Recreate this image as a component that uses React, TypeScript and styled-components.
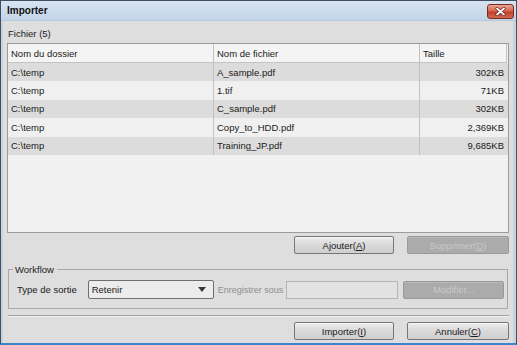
import React from "react";
import styled, { createGlobalStyle } from "styled-components";

const Global = createGlobalStyle`
  html, body { margin: 0; padding: 0; background: #dcdcdc; }
  body { font-family: "Liberation Sans", Arial, sans-serif; font-size: 9.5px; color: #1a1a1a; }
  * { box-sizing: border-box; }
`;

const Window = styled.div`
  width: 517px;
  height: 345px;
  display: flex;
  flex-direction: column;
  background: #dedede;
  border: 1px solid #3d4f63;
  border-bottom: 2px solid #3a86c8;
  box-shadow: inset 2px 0 0 #c7d3df, inset -3px 0 0 #c7d3df;
`;

const TitleBar = styled.div`
  height: 20px;
  display: flex;
  align-items: center;
  justify-content: space-between;
  padding: 0 2px 0 6px;
  background: linear-gradient(#d6e3f1, #c3d5e9);
  border-bottom: 1px solid #b9c8d8;
`;

const Title = styled.span`
  font-weight: bold;
  font-size: 10px;
  color: #111;
`;

const CloseBtn = styled.div`
  width: 27px;
  height: 15px;
  margin-top: 1px;
  border: 1px solid #7a2a20;
  border-radius: 3px;
  background: linear-gradient(#e8a596 0%, #d8664f 45%, #c0402c 55%, #d06a52 100%);
  display: flex;
  align-items: center;
  justify-content: center;
`;

const Body = styled.div`
  flex: 1;
  display: flex;
  flex-direction: column;
  padding: 0 7px 0 6px;
`;

const SectionLabel = styled.div`
  height: 22px;
  display: flex;
  align-items: center;
  padding-top: 2px;
  padding-left: 1px;
`;

const Table = styled.div`
  height: 190px;
  border: 1px solid #9c9c9c;
  background: #f1f1f1;
  display: flex;
  flex-direction: column;
`;

const Row = styled.div<{ $header?: boolean; $alt?: boolean }>`
  display: grid;
  grid-template-columns: 206px 206px 1fr;
  height: ${(p) => (p.$header ? "19px" : "18.4px")};
  background: ${(p) => (p.$header ? "#f4f4f4" : p.$alt ? "#f0f0f0" : "#dcdcdc")};
  border-bottom: ${(p) => (p.$header ? "1px solid #c4c4c4" : "none")};
  margin-right: ${(p) => (p.$header ? "1px" : "0")};
  border-right: ${(p) => (p.$header ? "1px solid #c4c4c4" : "none")};
`;

const Cell = styled.div<{ $right?: boolean; $last?: boolean }>`
  display: flex;
  align-items: center;
  justify-content: ${(p) => (p.$right ? "flex-end" : "flex-start")};
  padding: 0 4px 0 3px;
  border-right: ${(p) => (p.$last ? "none" : "1px solid #c2c2c2")};
  white-space: nowrap;
  overflow: hidden;
`;

const ButtonRow = styled.div<{ $top: number }>`
  display: flex;
  justify-content: flex-end;
  gap: 13px;
  margin-top: ${(p) => p.$top}px;
`;

const Button = styled.div<{ $disabled?: boolean; $w?: number }>`
  width: ${(p) => p.$w ?? 100}px;
  height: 18px;
  flex: none;
  display: flex;
  align-items: center;
  justify-content: center;
  border: 1px solid ${(p) => (p.$disabled ? "#9a9a9a" : "#767676")};
  border-radius: 2px;
  background: ${(p) =>
    p.$disabled ? "#ababab" : "linear-gradient(#ececec, #d9d9d9 50%, #cfcfcf)"};
  color: ${(p) => (p.$disabled ? "#c9c9c9" : "#1a1a1a")};
  box-shadow: ${(p) => (p.$disabled ? "inset 0 1px 0 #b8b8b8" : "inset 0 1px 0 #f8f8f8")};
`;

const Group = styled.fieldset`
  margin: 10px 1px 0 1px;
  padding: 5px 3px 0 8px;
  border: 1px solid #a8a8a8;
  border-radius: 0;
  height: 45px;
  display: flex;
  align-items: center;
`;

const Legend = styled.legend`
  padding: 0 3px 0 2px;
  margin-left: -4px;
  font-size: 9.5px;
  color: #1a1a1a;
`;

const GroupRow = styled.div`
  display: flex;
  align-items: center;
  width: 100%;
`;

const FieldLabel = styled.span<{ $disabled?: boolean; $small?: boolean }>`
  color: ${(p) => (p.$disabled ? "#8e8e8e" : "#1a1a1a")};
  font-size: ${(p) => (p.$small ? "9px" : "9.5px")};
  white-space: nowrap;
`;

const Select = styled.div`
  width: 126px;
  height: 19px;
  flex: none;
  margin-left: 11px;
  margin-right: 4px;
  border: 1px solid #6e6e6e;
  border-radius: 2px;
  background: #ececec;
  display: flex;
  align-items: center;
  justify-content: space-between;
  padding: 0 7px 0 3px;
`;

const Arrow = styled.div`
  width: 0;
  height: 0;
  border-left: 4px solid transparent;
  border-right: 4px solid transparent;
  border-top: 5px solid #3a3a3a;
`;

const TextInput = styled.div`
  flex: 1;
  height: 18px;
  margin-left: 3px;
  margin-right: 5px;
  border: 1px solid #b5b5b5;
  background: #e2e2e2;
`;

const Separator = styled.div`
  margin-top: 6px;
  height: 2px;
  border-top: 1px solid #a3a3a3;
  border-bottom: 1px solid #f2f2f2;
  margin-left: 1px;
`;

const U = styled.span`
  text-decoration: underline;
`;

const rows = [
  ["C:\\temp", "A_sample.pdf", "302KB"],
  ["C:\\temp", "1.tif", "71KB"],
  ["C:\\temp", "C_sample.pdf", "302KB"],
  ["C:\\temp", "Copy_to_HDD.pdf", "2,369KB"],
  ["C:\\temp", "Training_JP.pdf", "9,685KB"],
];

export default function App() {
  return (
    <>
      <Global />
      <Window>
        <TitleBar>
          <Title>Importer</Title>
          <CloseBtn>
            <svg width="11" height="9" viewBox="0 0 11 9">
              <path d="M2 1.5 L9 7.5 M9 1.5 L2 7.5" stroke="#5a1a12" strokeWidth="3" strokeLinecap="round" />
              <path d="M2 1.5 L9 7.5 M9 1.5 L2 7.5" stroke="#ffffff" strokeWidth="1.8" strokeLinecap="round" />
            </svg>
          </CloseBtn>
        </TitleBar>
        <Body>
          <SectionLabel>Fichier (5)</SectionLabel>
          <Table>
            <Row $header>
              <Cell>Nom du dossier</Cell>
              <Cell>Nom de fichier</Cell>
              <Cell $last>Taille</Cell>
            </Row>
            {rows.map((r, i) => (
              <Row key={i} $alt={i % 2 === 1}>
                <Cell>{r[0]}</Cell>
                <Cell>{r[1]}</Cell>
                <Cell $right $last>{r[2]}</Cell>
              </Row>
            ))}
          </Table>
          <ButtonRow $top={3}>
            <Button>
              Ajouter(<U>A</U>)
            </Button>
            <Button $disabled $w={102}>
              Supprimer(<U>D</U>)
            </Button>
          </ButtonRow>
          <Group>
            <Legend>Workflow</Legend>
            <GroupRow>
              <FieldLabel>Type de sortie</FieldLabel>
              <Select>
                <span>Retenir</span>
                <Arrow />
              </Select>
              <FieldLabel $disabled $small>Enregistrer sous</FieldLabel>
              <TextInput />
              <Button $disabled $w={101}>
                Modifier...
              </Button>
            </GroupRow>
          </Group>
          <Separator />
          <ButtonRow $top={5}>
            <Button>
              Importer(<U>I</U>)
            </Button>
            <Button $w={102}>
              Annuler(<U>C</U>)
            </Button>
          </ButtonRow>
        </Body>
      </Window>
    </>
  );
}
